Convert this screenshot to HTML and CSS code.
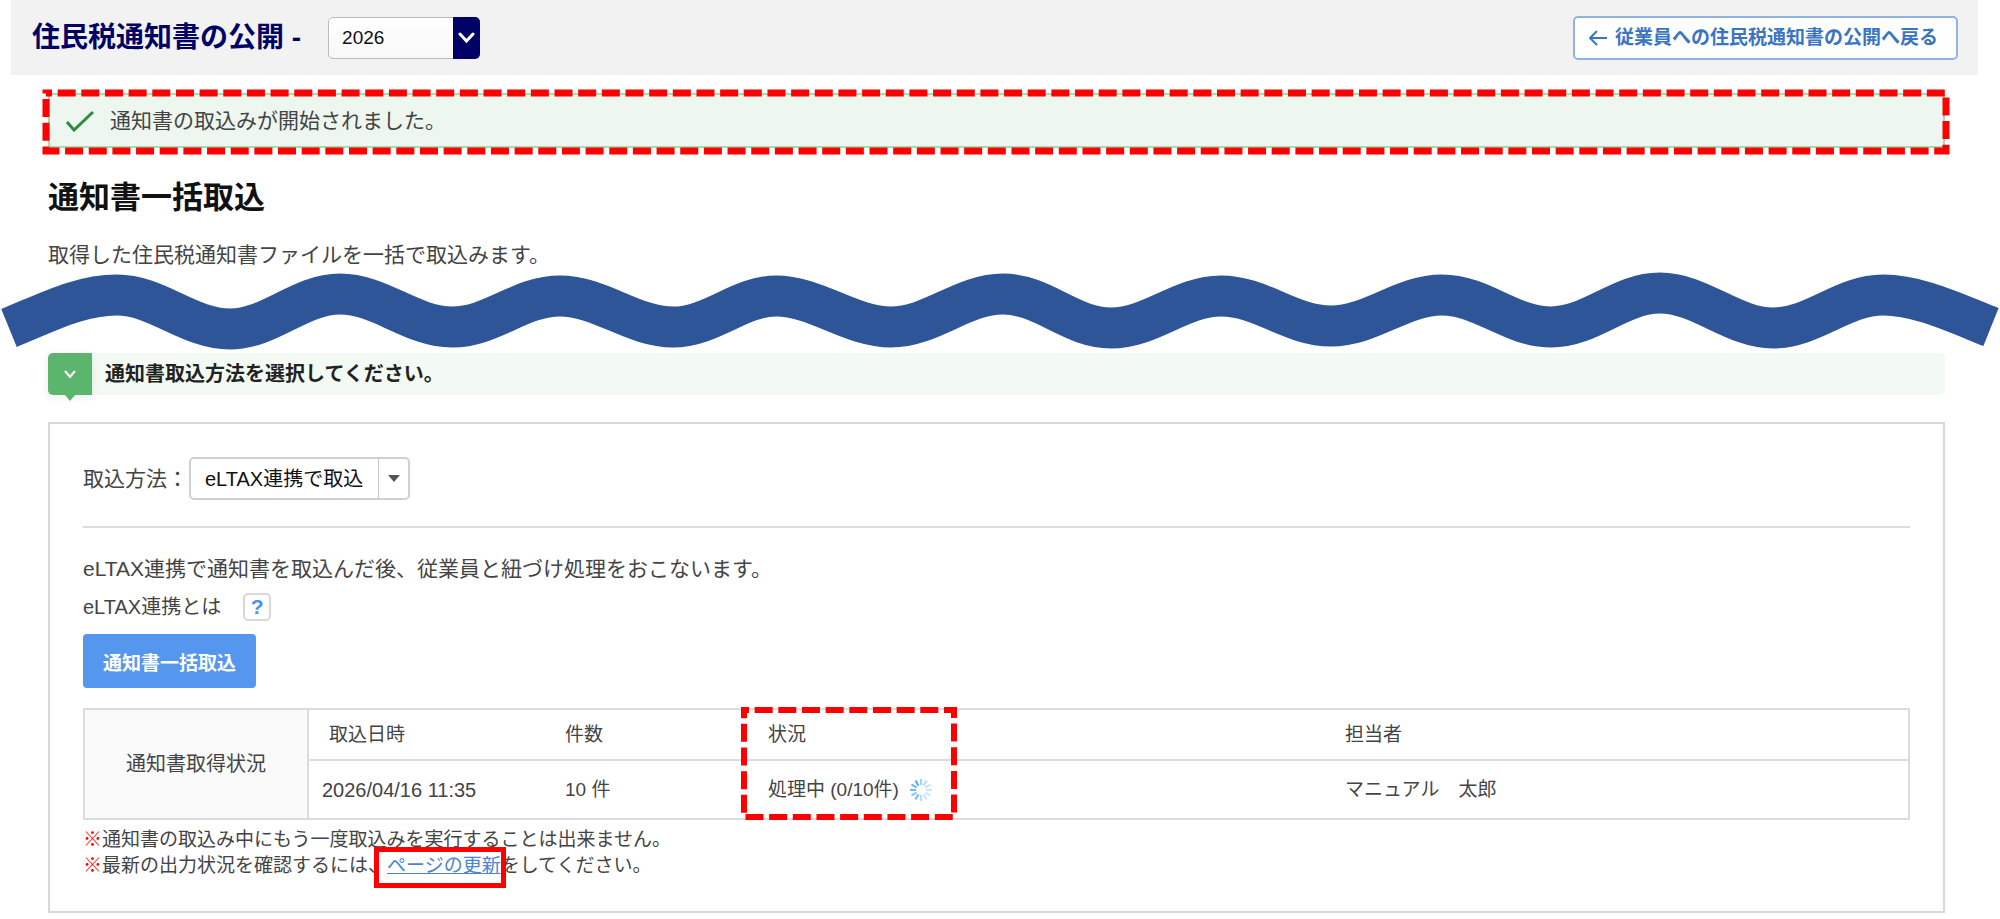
FILE: index.html
```html
<!DOCTYPE html>
<html lang="ja">
<head>
    <meta charset="UTF-8">
    <meta name="viewport" content="width=device-width, initial-scale=1.0">
    <title>住民税通知書の公開</title>
    <link rel="stylesheet" href="styles.css">
</head>
<body>
    <header class="header">
        <div class="header-title">
            <label for="year">住民税通知書の公開 -</label>
            <div class="year-select">
                <select id="year">
                    <option>2026</option>
                    <option>2025</option>
                </select>
                <span class="year-arrow">
                    <svg width="17" height="12" viewBox="0 0 17 12"><path d="M2 2l6.500 7 6.500-7" fill="none" stroke="#fff" stroke-width="3" stroke-linecap="round"/></svg>
                </span>
            </div>
        </div>
        <a class="back" href="#">
            <svg width="20" height="18" viewBox="0 0 20 18"><path d="M19 9H2M9 2L2 9l7 7" fill="none" stroke="currentColor" stroke-width="2"/></svg>
            従業員への住民税通知書の公開へ戻る
        </a>
    </header>

    <main>
        <div class="alert" role="status">
            <svg width="30" height="22" viewBox="0 0 30 22"><path d="M2 12l7 8L28 2" fill="none" stroke="#2e8b3d" stroke-width="3"/></svg>
            通知書の取込みが開始されました。
            <svg class="marker marker-alert"><rect width="100%" height="100%"/></svg>
        </div>

        <h1>通知書一括取込</h1>
        <p class="lead">取得した住民税通知書ファイルを一括で取込みます。</p>

        <!-- 省略部分の波線 -->
        <svg class="wave" viewBox="0 271 2000 82" preserveAspectRatio="none">
            <path d="M9 328C48 312 80 295 117 295C157 295 189 329 230 329C270 329 300 294 340 294C380 294 412 327 452 327C492 327 520 296 560 296C600 296 633 327 673 327C711 327 740 296 776 296C816 296 851 327 891 327C931 327 963 294 1003 294C1043 294 1071 328 1111 328C1151 328 1181 296 1221 296C1261 296 1291 326 1331 326C1371 326 1402 295 1442 295C1482 295 1511 327 1551 327C1591 327 1620 293 1660 293C1700 293 1733 328 1773 328C1813 328 1843 295 1883 295C1917 295 1951 311 1991 327"/>
        </svg>

        <h2 class="step">
            <span class="step-tag">
                <svg width="12" height="9" viewBox="0 0 12 9"><path d="M1 1l5 6 5-6" fill="none" stroke="#fff" stroke-width="2"/></svg>
            </span>
            通知書取込方法を選択してください。
        </h2>

        <section class="panel">
            <div class="method">
                <label for="method">取込方法：</label>
                <div class="method-select">
                    <select id="method">
                        <option>eLTAX連携で取込</option>
                    </select>
                    <span class="method-arrow"></span>
                </div>
            </div>
            <hr>
            <p class="description">eLTAX連携で通知書を取込んだ後、従業員と紐づけ処理をおこないます。</p>
            <div class="about">
                <span>eLTAX連携とは</span>
                <button class="help" type="button">?</button>
            </div>
            <button class="import" type="button">通知書一括取込</button>

            <table>
                <colgroup>
                    <col class="col-label">
                    <col class="col-date">
                    <col class="col-count">
                    <col class="col-status">
                    <col>
                </colgroup>
                <tr class="row-head">
                    <th class="label" rowspan="2" scope="rowgroup">通知書取得状況</th>
                    <th scope="col">取込日時</th>
                    <th scope="col">件数</th>
                    <th class="status" scope="col">状況
                        <svg class="marker marker-status"><rect width="100%" height="100%"/></svg>
                    </th>
                    <th scope="col">担当者</th>
                </tr>
                <tr class="row-data">
                    <td class="date">2026/04/16 11:35</td>
                    <td>10 件</td>
                    <td>
                        <div class="progress">
                            処理中 (0/10件)
                            <svg width="24" height="24" viewBox="-12 -12 24 24" stroke="#4aabf7" stroke-width="2">
                                <path d="M0-5V-11" opacity=".5"/>
                                <path d="M0-5V-11" opacity=".4" transform="rotate(30)"/>
                                <path d="M0-5V-11" opacity=".35" transform="rotate(60)"/>
                                <path d="M0-5V-11" opacity=".3" transform="rotate(90)"/>
                                <path d="M0-5V-11" opacity=".3" transform="rotate(120)"/>
                                <path d="M0-5V-11" opacity=".3" transform="rotate(150)"/>
                                <path d="M0-5V-11" opacity=".4" transform="rotate(180)"/>
                                <path d="M0-5V-11" opacity=".8" transform="rotate(210)"/>
                                <path d="M0-5V-11" opacity=".7" transform="rotate(240)"/>
                                <path d="M0-5V-11" opacity=".8" transform="rotate(270)"/>
                                <path d="M0-5V-11" opacity=".9" transform="rotate(300)"/>
                                <path d="M0-5V-11" transform="rotate(330)"/>
                            </svg>
                        </div>
                    </td>
                    <td>マニュアル　太郎</td>
                </tr>
            </table>

            <ul class="notes">
                <li><span class="mark">※</span>通知書の取込み中にもう一度取込みを実行することは出来ません。</li>
                <li><span class="mark">※</span>最新の出力状況を確認するには、<a class="reload" href="#">ページの更新</a>をしてください。</li>
            </ul>
        </section>
    </main>
</body>
</html>
```
FILE: styles.css
```css
* {
    box-sizing: border-box;
}

body {
    margin: 0;
    background: #fff;
    color: #444;
    font-family: "Liberation Sans", "Noto Sans CJK JP", sans-serif;
    font-size: 21px;
    line-height: 30px;
}

select,
button {
    font-family: inherit;
    cursor: pointer;
}

select {
    appearance: none;
    width: 100%;
    height: 100%;
    border: 1px solid #bbb;
    border-radius: 5px;
    color: #111;
}

/* ヘッダー */
.header {
    display: flex;
    justify-content: space-between;
    align-items: center;
    height: 75px;
    margin: 0 22px 0 11px;
    padding: 0 20px 0 21px;
    background: #f2f2f2;
}

.header-title {
    display: flex;
    align-items: center;
    gap: 27px;
    color: #000066;
    font-size: 28px;
    font-weight: bold;
}

.year-select {
    position: relative;
    width: 152px;
    height: 42px;
}

.year-select select {
    padding: 0 13px;
    background: linear-gradient(#fff, #f8f8f8);
    font-size: 19px;
}

.year-arrow {
    position: absolute;
    top: 0;
    right: 0;
    bottom: 0;
    display: flex;
    align-items: center;
    justify-content: center;
    width: 27px;
    border-radius: 0 5px 5px 0;
    background: #000066;
    pointer-events: none;
}

.back {
    display: flex;
    align-items: center;
    gap: 7px;
    height: 44px;
    padding: 0 18px 0 13px;
    border: 2px solid #8fb4e3;
    border-radius: 5px;
    background: #fff;
    color: #3a75c4;
    font-size: 19px;
    font-weight: bold;
    text-decoration: none;
}

main {
    padding: 18px 55px 0 48px;
}

/* 赤い点線の強調枠 */
.marker {
    position: absolute;
    overflow: visible;
    fill: none;
    stroke: #f00;
    stroke-dasharray: 18 5.66;
    pointer-events: none;
}

.marker-alert {
    top: -2px;
    left: -4px;
    width: calc(100% + 7px);
    height: 58px;
    stroke-width: 7px;
    stroke-dashoffset: 12px;
}

.marker-status {
    top: 0;
    left: -4px;
    width: 210px;
    height: 107px;
    stroke-width: 6px;
    stroke-dashoffset: 13px;
}

.alert {
    position: relative;
    display: flex;
    align-items: center;
    gap: 15px;
    height: 55px;
    padding: 0 15px;
    border: 2px solid #a3dcb4;
    border-radius: 4px;
    background: #edf7f0;
}

h1 {
    margin: 30px 0 0;
    color: #111;
    font-size: 31px;
    line-height: 40px;
}

.lead {
    margin: 22px 0 0;
}

.wave {
    display: block;
    width: calc(100% + 103px);
    height: 82px;
    margin: 1px 0 0 -48px;
}

.wave path {
    fill: none;
    stroke: #2e5597;
    stroke-width: 41px;
}

.step {
    display: flex;
    align-items: center;
    gap: 13px;
    height: 42px;
    margin: 0;
    border-radius: 5px;
    background: #f3faf4;
    color: #222;
    font-size: 20px;
}

.step-tag {
    position: relative;
    display: flex;
    align-items: center;
    justify-content: center;
    width: 44px;
    height: 42px;
    border-radius: 5px 0 0 5px;
    background: #5cb56c;
    box-shadow: 0 2px 10px rgba(0,0,0,0.08);
}

.step-tag::after {
    content: "";
    position: absolute;
    top: 100%;
    left: 17px;
    border: 5px solid transparent;
    border-top: 6px solid #5cb56c;
    border-bottom: 0;
}

/* 取込パネル */
.panel {
    margin-top: 27px;
    padding: 33px 33px 32px;
    border: 2px solid #d8d8d8;
}

.method {
    display: flex;
    align-items: center;
}

.method-select {
    position: relative;
    width: 221px;
    height: 43px;
    margin-left: 1px;
}

.method-select select {
    padding: 0 14px;
    border: 2px solid #d0d0d0;
    background: #fff;
    font-size: 20px;
}

.method-arrow {
    position: absolute;
    top: 1px;
    right: 1px;
    bottom: 1px;
    display: flex;
    align-items: center;
    justify-content: center;
    width: 31px;
    border-left: 1px solid #c8c8c8;
    pointer-events: none;
}

.method-arrow::after {
    content: "";
    border: 6px solid transparent;
    border-top: 7px solid #555;
    border-bottom: 0;
}

hr {
    height: 2px;
    margin: 26px 0;
    border: 0;
    background: #dcdcdc;
}

.description {
    margin: 0;
}

.about {
    display: flex;
    align-items: center;
    gap: 22px;
    height: 28px;
    margin-top: 9px;
    font-size: 20px;
}

.help {
    width: 28px;
    height: 28px;
    padding: 0;
    border: 2px solid #d8d8d8;
    border-radius: 5px;
    background: #fff;
    color: #4a90f0;
    font-size: 21px;
    font-weight: bold;
    line-height: 24px;
}

.import {
    display: block;
    height: 54px;
    margin: 13px 0 20px;
    padding: 0 20px;
    border: 0;
    border-radius: 4px;
    background: #5596ef;
    color: #fff;
    font-size: 19px;
    font-weight: bold;
}

table {
    width: 100%;
    border: 2px solid #dcdcdc;
    border-collapse: collapse;
    table-layout: fixed;
    font-size: 19px;
}

.col-label {
    width: 224px;
}

.col-date {
    width: 237px;
}

.col-count {
    width: 203px;
}

.col-status {
    width: 577px;
}

th,
td {
    padding: 0 0 0 20px;
    font-weight: normal;
    text-align: left;
}

.row-head {
    height: 51px;
    border-bottom: 2px solid #dcdcdc;
}

.row-data {
    height: 59px;
}

.label {
    padding: 0;
    border-right: 2px solid #dcdcdc;
    background: #fafafa;
    font-size: 20px;
    text-align: center;
}

.date {
    padding-left: 13px;
    font-size: 20px;
}

.status {
    position: relative;
}

.progress {
    display: flex;
    align-items: center;
    gap: 10px;
}

.notes {
    margin: 7px 0 0;
    padding: 0;
    list-style: none;
    font-size: 19px;
    line-height: 26px;
}

.mark {
    color: #f00;
    font-weight: bold;
}

.reload {
    position: relative;
    color: #4a86d0;
}

.reload::after {
    content: "";
    position: absolute;
    inset: -8px -5px -12px -13px;
    border: 5px solid #f00;
}
```
